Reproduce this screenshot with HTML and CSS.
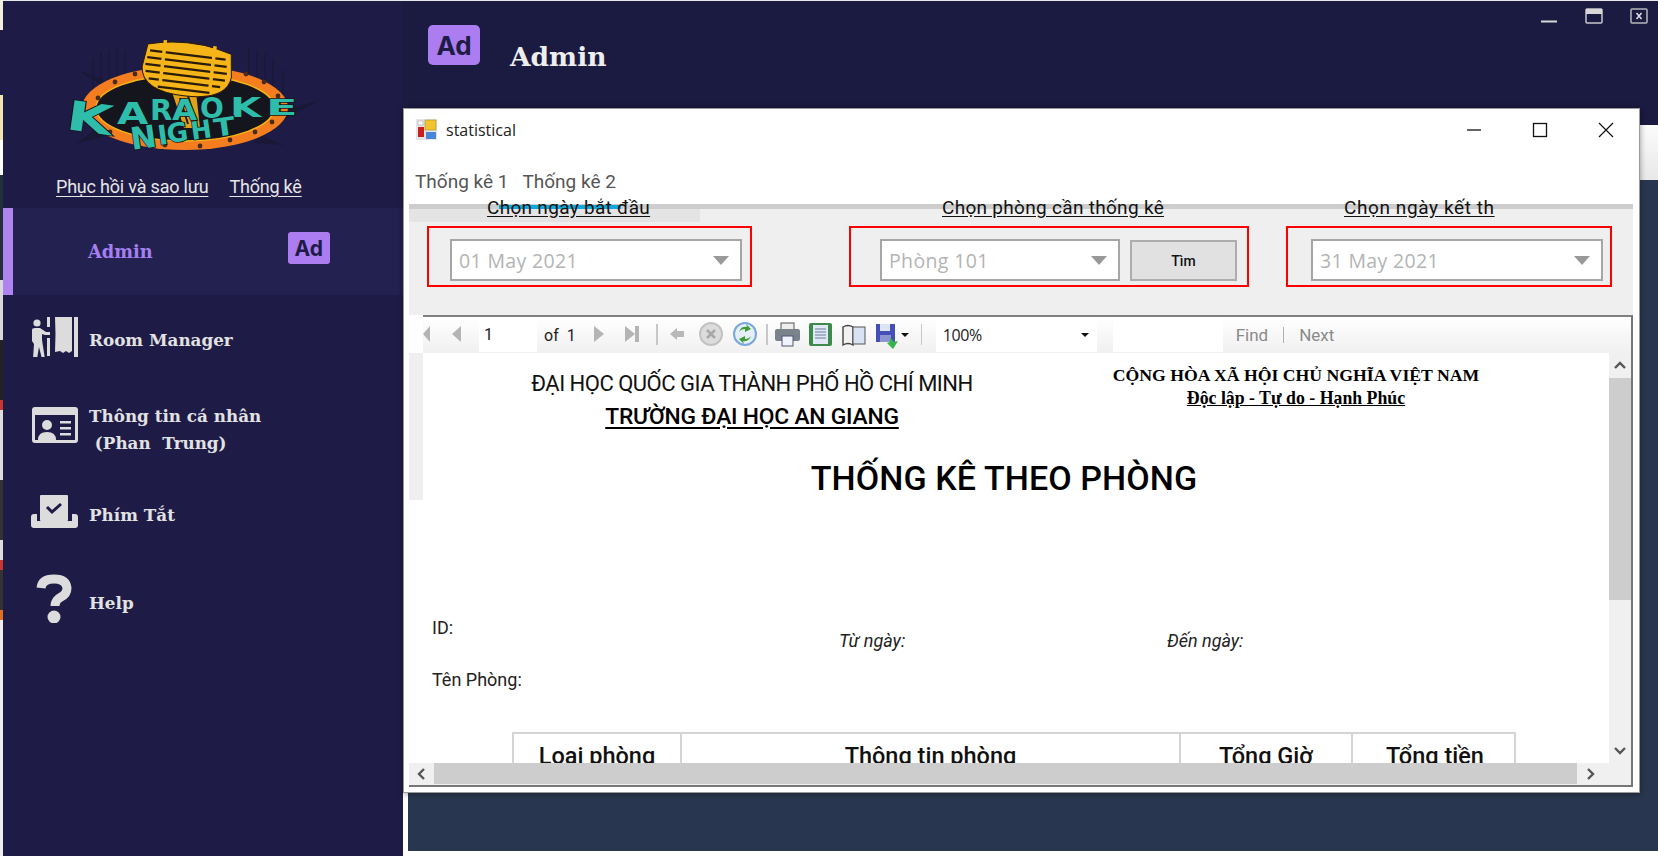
FILE: index.html
```html
<!DOCTYPE html>
<html lang="vi">
<head>
<meta charset="utf-8">
<title>statistical</title>
<link rel="stylesheet" href="styles.css">
</head>
<body>
<div class="app">
  <div class="edge"></div>
  <aside class="sidebar">
    <svg class="logo" viewBox="0 0 280 130" width="280" height="130">
      <g fill="#111118" opacity=".35">
        <path d="M28 40l26 10-4 4zM228 82l42-12-36 20zM45 100l-20 14 30-8zM210 105l24 10-30-2z"/>
        <g opacity=".7">
          <rect x="42" y="28" width="2" height="44"/><rect x="50" y="22" width="2" height="40"/><rect x="58" y="20" width="2" height="34"/><rect x="66" y="18" width="2" height="30"/><rect x="74" y="20" width="2" height="24"/>
          <rect x="198" y="18" width="2" height="30"/><rect x="206" y="20" width="2" height="36"/><rect x="214" y="24" width="2" height="40"/><rect x="222" y="28" width="2" height="40"/><rect x="232" y="40" width="2" height="36"/>
        </g>
      </g>
      <ellipse cx="135" cy="78" rx="103" ry="42" fill="#f47d20"/>
      <ellipse cx="135" cy="78" rx="89" ry="33" fill="#15151d" stroke="#f5b417" stroke-width="1.5"/>
      <g fill="#4a2c14">
        <circle cx="48" cy="68" r="2.4"/><circle cx="65" cy="52" r="2.4"/><circle cx="85" cy="44" r="2.4"/><circle cx="196" cy="44" r="2.4"/><circle cx="214" cy="52" r="2.4"/><circle cx="228" cy="66" r="2.4"/><circle cx="60" cy="102" r="2.4"/><circle cx="115" cy="115" r="2.4"/><circle cx="150" cy="116" r="2.4"/><circle cx="180" cy="110" r="2.4"/><circle cx="205" cy="102" r="2.4"/><circle cx="222" cy="92" r="2.4"/>
      </g>
      <path d="M122 62h24l4 36h-16z" fill="#e0a216"/>
      <path d="M130 68l8 26M138 66l8 26" stroke="#2a1c08" stroke-width="2" fill="none"/>
      <g transform="rotate(7 137 40)">
        <path d="M95 19Q137 7 179 19L182 42Q180 66 137 66Q94 66 92 42Z" fill="#f5b417" stroke="#2a1c08" stroke-width="1"/>
        <path d="M98 25h76M96 32h80M95 39h82M96 46h80M100 53h72M110 60h52" stroke="#2a1c08" stroke-width="2.200" fill="none"/>
        <path d="M112 13v44M162 13v44" stroke="#f5b417" stroke-width="3.500" fill="none"/>
      </g>
      <g class="logo-type">
        <text font-size="41" transform="translate(15 99) rotate(8) scale(1.45 1)">K</text>
        <text font-size="30" transform="translate(67 94) scale(1.35 1)">A</text>
        <text font-size="29" transform="translate(100 90)">R</text>
        <text font-size="29" transform="translate(122 90) scale(1.12 1)">A</text>
        <text font-size="28" transform="translate(150 88)">O</text>
        <text font-size="26" transform="translate(180 87) scale(1.55 1)">K</text>
        <text font-size="22" transform="translate(216 85) scale(2.100 1)">E</text>
        <text font-size="31" transform="translate(82 120) rotate(-8)">N</text>
        <text font-size="27" transform="translate(109 115) rotate(-8)">I</text>
        <text font-size="26" transform="translate(118 113) rotate(-8)">G</text>
        <text font-size="25" transform="translate(142 110) rotate(-8)">H</text>
        <text font-size="25" transform="translate(165 107) rotate(-8) scale(1.25 1)">T</text>
      </g>
    </svg>
    <nav class="links">
      <a class="link">Phục hồi và sao lưu</a>
      <a class="link">Thống kê</a>
    </nav>
    <div class="current">
      <span class="current-name">Admin</span>
      <span class="badge badge-small">Ad</span>
    </div>
    <ul class="menu">
      <li class="menu-item item-room">
        <svg class="icon" viewBox="0 0 46 41" width="46" height="41" fill="#dcdcdc">
          <circle cx="5" cy="7" r="3.6"/>
          <path d="M0 14q0-2 3-2h5l6 4h4v3h-5l-3-1v6l3 19h-3l-3-12-2 12H1l1-15-2-3z"/>
          <path d="M15 1h3v10h-3zM15 22h3v18h-3z"/>
          <path d="M23 1h17v34l-3 2-3-2-3 2-3-2-5 1q1-18 0-35z"/>
          <path d="M42 1h4v40h-4z"/>
        </svg>
        <span class="item-label">Room Manager</span>
      </li>
      <li class="menu-item item-card">
        <svg class="icon" viewBox="0 0 46 36" width="46" height="36">
          <rect width="46" height="36" rx="3" fill="#dcdcdc"/>
          <rect x="3" y="8" width="40" height="25" fill="#1e1c46"/>
          <circle cx="15" cy="18" r="5" fill="#dcdcdc"/>
          <path d="M6 33q0-8 9-8t9 8z" fill="#dcdcdc"/>
          <path d="M28 14h11v2.500H28zM28 20h11v2.500H28zM28 26h11v2.500H28z" fill="#dcdcdc"/>
        </svg>
        <span class="item-label">Thông tin cá nhân<br>&nbsp;(Phan&nbsp; Trung)</span>
      </li>
      <li class="menu-item item-keys">
        <svg class="icon" viewBox="0 0 47 33" width="47" height="33">
          <rect x="9" width="28" height="26" rx="1" fill="#dcdcdc"/>
          <path d="M16 12l5 5 9-8" fill="none" stroke="#1e1c46" stroke-width="3"/>
          <path d="M3 19h3v7h35v-7h3q3 0 3 3v8q0 3-3 3H3q-3 0-3-3v-8q0-3 3-3z" fill="#dcdcdc"/>
        </svg>
        <span class="item-label">Phím Tắt</span>
      </li>
      <li class="menu-item item-help">
        <svg class="icon icon-help" viewBox="0 0 36 49" width="36" height="49">
          <path d="M5 14q1-9 13-9t13 9q0 6-6 9t-6 9" fill="none" stroke="#dcdcdc" stroke-width="9"/>
          <circle cx="18" cy="43" r="6.500" fill="#dcdcdc"/>
        </svg>
        <span class="item-label">Help</span>
      </li>
    </ul>
  </aside>
  <main class="main">
    <header class="topbar">
      <span class="badge badge-large">Ad</span>
      <span class="top-name">Admin</span>
      <div class="sys-controls">
        <svg viewBox="0 0 18 16" width="18" height="16"><path d="M1 13.500h16" stroke="#d8d8d8" stroke-width="2"/></svg>
        <svg viewBox="0 0 18 16" width="18" height="16"><rect x="1" y="1" width="16" height="14" rx="1" fill="none" stroke="#c8c8c8" stroke-width="1.500"/><rect x="1" y="1" width="16" height="5" fill="#d8d8d8"/></svg>
        <svg viewBox="0 0 18 16" width="18" height="16"><rect x="1" y="1" width="16" height="14" rx="1" fill="none" stroke="#b8b8b8" stroke-width="1.500"/><path d="M6.500 5l5 6m0-6l-5 6" stroke="#e0e0e0" stroke-width="1.500"/></svg>
      </div>
    </header>
    <div class="content">
      <div class="content-strip"></div>
      <div class="content-panel"></div>
    </div>
  </main>
</div>

<section class="window">
  <div class="win-title">
    <svg class="win-icon" viewBox="0 0 21 21" width="21" height="21">
      <rect width="21" height="21" fill="#e4e4e4"/>
      <rect x="9" y="1" width="11" height="10" fill="#f2c430" stroke="#b08a20" stroke-width=".6"/>
      <rect x="2" y="8" width="6" height="10" fill="#c8201c"/>
      <rect x="10" y="13" width="10" height="7" fill="#4a86d8"/>
      <rect x="2" y="2" width="5" height="4" fill="#fff" stroke="#aaa" stroke-width=".6"/>
    </svg>
    <span class="win-name">statistical</span>
    <div class="win-controls">
      <svg viewBox="0 0 16 16" width="16" height="16"><path d="M1 8h14" stroke="#111" stroke-width="1.300"/></svg>
      <svg viewBox="0 0 16 16" width="16" height="16"><rect x="1.500" y="1.500" width="13" height="13" fill="none" stroke="#111" stroke-width="1.300"/></svg>
      <svg viewBox="0 0 16 16" width="16" height="16"><path d="M1 1l14 14M15 1L1 15" stroke="#111" stroke-width="1.200"/></svg>
    </div>
  </div>
  <div class="win-menu"><span>Thống kê 1</span><span>Thống kê 2</span></div>

  <div class="filters">
    <div class="tab-hint"></div>
    <div class="group group-start">
      <div class="group-label">Chọn ngày bắt đầu</div>
      <div class="red-box">
        <div class="combo"><span>01 May 2021</span><i class="caret"></i></div>
      </div>
    </div>
    <div class="group group-room">
      <div class="group-label">Chọn phòng cần thống kê</div>
      <div class="red-box">
        <div class="combo"><span>Phòng 101</span><i class="caret"></i></div>
        <button class="find-btn">Tìm</button>
      </div>
    </div>
    <div class="group group-end">
      <div class="group-label">Chọn ngày kết th</div>
      <div class="red-box">
        <div class="combo"><span>31 May 2021</span><i class="caret"></i></div>
      </div>
    </div>
  </div>

  <div class="viewer">
    <div class="toolbar">
      <svg class="nav-a" viewBox="0 0 56 36" width="56" height="36" fill="#b4b4b4">
        <path d="M7 9v16L0 17zM38 9v16l-9-8z"/>
      </svg>
      <div class="page-box">1</div>
      <span class="of">of</span><span class="of-num">1</span>
      <svg class="nav-b" viewBox="0 0 331 36" width="331" height="36">
        <path d="M3 9l10 8-10 8zM34 9l10 8-10 8z" fill="#b4b4b4"/>
        <rect x="44" y="9" width="4" height="16" fill="#b4b4b4"/>
        <path d="M66 7v21M176 7v21M331 7v21" stroke="#b8b8b8" stroke-width="1.500"/>
        <path d="M79 17l7-6v3h7v6h-7v3z" fill="#b8b8b8"/>
        <circle cx="120" cy="17" r="11" fill="#dcdcdc" stroke="#c2c2c2" stroke-width="2"/>
        <path d="M116 13l8 8m0-8l-8 8" stroke="#a8a8a8" stroke-width="2.500"/>
        <circle cx="154" cy="17" r="11" fill="#e4effa" stroke="#7aa7dc" stroke-width="2"/>
        <path d="M148 15q2-6 8-5l-1-3 5 5-6 3 0-3q-4 0-6 3zM160 19q-2 6-8 5l1 3-5-5 6-3 0 3q4 0 6-3z" fill="#3f9b35"/>
        <rect x="190" y="6" width="13" height="7" fill="#eee" stroke="#555"/>
        <rect x="184" y="12" width="25" height="12" rx="2" fill="#7a838c"/>
        <rect x="191" y="19" width="11" height="10" fill="#eef4fb" stroke="#557"/>
        <rect x="218" y="6" width="23" height="23" rx="2" fill="#3e8a4c"/>
        <rect x="222" y="8" width="15" height="19" fill="#dfe8f3"/>
        <path d="M224 12h11M224 15h11M224 18h11M224 21h11" stroke="#6b7f99"/>
        <path d="M252 10q5-3 10 0v18q-5-3-10 0z" fill="#f2f2f2" stroke="#444" stroke-width="1.400"/>
        <rect x="262" y="10" width="12" height="17" fill="#d7e3f3" stroke="#555"/>
        <path d="M285 7h19v18h-19z" fill="#4450b8"/>
        <rect x="289" y="7" width="10" height="7" fill="#dfe4f2"/>
        <rect x="289" y="18" width="11" height="7" fill="#8d95d0"/>
        <path d="M299 20l4 5 4-1-5 8-6-6 3-1z" fill="#36b34a"/>
        <path d="M310 16h8l-4 4z" fill="#111"/>
      </svg>
      <div class="zoom-box"><span>100%</span><i class="caret-small"></i></div>
      <div class="find-box"></div>
      <span class="tool-link">Find</span>
      <span class="tool-sep"></span>
      <span class="tool-link">Next</span>
    </div>
    <div class="view-body">
      <div class="report">
        <div class="report-gutter"></div>
        <div class="report-head">
          <div class="head-left">
            <div class="uni">ĐẠI HỌC QUỐC GIA THÀNH PHỐ HỒ CHÍ MINH</div>
            <div class="school">TRƯỜNG ĐẠI HỌC AN GIANG</div>
          </div>
          <div class="head-right">
            <div class="nation">CỘNG HÒA XÃ HỘI CHỦ NGHĨA VIỆT NAM</div>
            <div class="motto">Độc lập - Tự do - Hạnh Phúc</div>
          </div>
        </div>
        <h1 class="report-title">THỐNG KÊ THEO PHÒNG</h1>
        <div class="meta">
          <div class="meta-col">
            <div class="meta-id">ID:</div>
            <div class="meta-room">Tên Phòng:</div>
          </div>
          <div class="meta-date date-from">Từ ngày:</div>
          <div class="meta-date date-to">Đến ngày:</div>
        </div>
        <div class="stat-table">
          <div class="cell cell-type">Loại phòng</div>
          <div class="cell cell-info">Thông tin phòng</div>
          <div class="cell cell-hours">Tổng Giờ</div>
          <div class="cell cell-money">Tổng tiền</div>
        </div>
      </div>
      <div class="vscroll">
        <svg viewBox="0 0 22 25" width="22" height="25"><path d="M6 15l5-5 5 5" fill="none" stroke="#555" stroke-width="2.400"/></svg>
        <div class="v-thumb"></div>
        <svg class="v-down" viewBox="0 0 22 25" width="22" height="25"><path d="M6 10l5 5 5-5" fill="none" stroke="#555" stroke-width="2.400"/></svg>
      </div>
    </div>
    <div class="hscroll">
      <svg viewBox="0 0 25 22" width="25" height="22"><path d="M15 6l-5 5 5 5" fill="none" stroke="#555" stroke-width="2.400"/></svg>
      <div class="h-thumb"></div>
      <svg viewBox="0 0 32 22" width="32" height="22"><path d="M11 6l5 5-5 5" fill="none" stroke="#555" stroke-width="2.400"/></svg>
      <div class="h-corner"></div>
    </div>
  </div>
</section>
</body>
</html>
```
FILE: styles.css
```css
* { box-sizing: border-box; }
html, body { margin: 0; padding: 0; width: 1658px; height: 856px; overflow: hidden; background: #fff; }
body { font-family: "Roboto", "Liberation Sans", sans-serif; color: #000; }

.app { display: flex; width: 1658px; height: 856px; }
.edge {
  width: 3px; flex: none;
  background: linear-gradient(#f4efdc 0 30px, #1e1c46 30px 95px, #f2e6b0 95px 140px, #fff 140px 175px, #20303c 175px 280px, #d8d8d8 280px 340px, #222 340px 400px, #c33 400px 410px, #ddd 410px 480px, #333 480px 540px, #ddd 540px 560px, #c33 560px 570px, #333 570px 610px, #e07020 610px 620px, #eee 620px 856px);
}
.sidebar { width: 400px; flex: none; background: #1e1c46; border-top: 1px solid #e8e8e8; padding-top: 29px; display: flex; flex-direction: column; }
.logo { display: block; margin-left: 47px; flex: none; }
.logo-type text { font-family: "DejaVu Sans", sans-serif; font-weight: 700; fill: #2ebdaa; stroke: #15151d; stroke-width: 1.600px; paint-order: stroke; }

.links { display: flex; gap: 21px; margin: 15px 0 0 53px; height: 32px; align-items: flex-start; }
.link { font-size: 18px; line-height: 24px; color: #e6e6e6; text-decoration: underline; text-underline-offset: 3px; letter-spacing: -.2px; }

.current { height: 87px; background: #23214f; border-left: 10px solid #b084f0; margin-top: 1px; position: relative; display: flex; align-items: center; }
.current-name { margin: 0 0 0 75px; font: 700 17.800px "DejaVu Serif", serif; color: #a57fef; }
.badge { display: flex; align-items: center; justify-content: center; background: #ab7df0; color: #1e1c46; font: 700 21px "Inter", sans-serif; border-radius: 3px; }
.badge-small { width: 42px; height: 32px; margin: -7px 0 0 135px; }
.badge-large { width: 52px; height: 40px; font-size: 26px; border-radius: 5px; }

.menu { list-style: none; margin: 0; padding: 0 0 0 28px; }
.menu-item { display: flex; align-items: flex-start; color: #e2e2e2; }
.icon { flex: none; display: block; }
.item-label { font: 700 16.800px/27px "DejaVu Serif", serif; margin-left: 11px; white-space: nowrap; }
.item-room { margin-top: 21px; height: 41px; }
.item-room .icon { margin-left: 1px; }
.item-room .item-label { margin-top: 11px; }
.item-card { margin-top: 49px; height: 56px; }
.item-card .icon { margin: 1px 0 0 1px; }
.item-card .item-label { margin-top: -3px; }
.item-keys { margin-top: 34px; }
.item-keys .icon { margin: -1px 0 0 0; }
.item-keys .item-label { margin-top: 6px; }
.item-help { margin-top: 45px; }
.icon-help { margin-left: 5px; margin-right: 6px; }
.item-help .item-label { margin-top: 16px; }

.main { flex: 1; display: flex; flex-direction: column; min-width: 0; }
.topbar { height: 125px; flex: none; background: #1b1a40; border-top: 1px solid #e8e8e8; position: relative; display: flex; align-items: flex-start; padding: 24px 0 0 25px; }
.top-name { font: 700 26.500px "DejaVu Serif", serif; color: #eee; margin: 16px 0 0 30px; }
.sys-controls { display: flex; gap: 27px; margin-left: auto; margin-top: -17px; margin-right: 10px; }
.content { flex: 1; background: #fff; padding: 0 0 5px 5px; display: flex; flex-direction: column; }
.content-strip { height: 55px; background: linear-gradient(#fbfbfb, #e8e8e8); flex: none; }
.content-panel { flex: 1; background: #28374f; }

.window { position: absolute; left: 403px; top: 108px; width: 1237px; height: 685px; background: #fff; border: 1px solid #9a9a9a; box-shadow: 0 1px 6px rgba(0,0,0,.4); padding: 0 6px 5px 5px; display: flex; flex-direction: column; }
.win-title { height: 41px; display: flex; align-items: center; flex: none; padding-left: 7px; }
.win-icon { flex: none; }
.win-name { font: 16px "Open Sans", sans-serif; color: #222; margin-left: 9px; }
.win-controls { margin-left: auto; display: flex; gap: 50px; margin-right: 19px; }
.win-menu { height: 54px; flex: none; display: flex; gap: 14px; padding: 19px 0 0 6px; font: 19px/26px "Roboto", sans-serif; color: #555; }

.filters { flex: none; height: 111px; background: #efefef; border-top: 5px solid #cdcdcd; padding-left: 18px; display: flex; position: relative; }
.tab-hint { position: absolute; left: 0; top: 0; width: 291px; height: 13px; background: #e4e4e4; }
.tab-hint::before { content: ""; position: absolute; left: 90px; top: -4px; width: 122px; height: 4px; background: #10a8d8; }
.group { position: relative; margin-top: -11px; }
.group-label { font-size: 19px; line-height: 20px; height: 20px; margin-bottom: 8px; text-decoration: underline; text-underline-offset: 2px; letter-spacing: .3px; color: #111; white-space: nowrap; }
.group-start { width: 325px; }
.group-start .group-label { padding-left: 60px; }
.group-room { width: 400px; margin-left: 97px; }
.group-room .group-label { padding-left: 93px; }
.group-end { width: 326px; margin-left: 37px; }
.group-end .group-label { padding-left: 58px; letter-spacing: .6px; }
.red-box { height: 61px; border: 2px solid #ff0000; display: flex; align-items: flex-start; padding-top: 11px; }
.group-start .red-box { padding-left: 21px; }
.group-room .red-box { padding-left: 29px; }
.group-end .red-box { padding-left: 23px; }
.combo { width: 292px; height: 42px; background: #fff; border: 2px solid #a6a6a6; display: flex; align-items: center; padding: 0 11px 0 7px; font: 19.500px "Open Sans", sans-serif; letter-spacing: .35px; color: #b4b4b4; }
.group-room .combo { width: 240px; }
.caret { margin-left: auto; width: 0; height: 0; border: 8.5px solid transparent; border-top: 9px solid #999; border-bottom: 0; }
.find-btn { width: 107px; height: 41px; margin: 1px 0 0 10px; background: #e1e1e1; border: 2px solid #adadad; font: 500 14px "Roboto", sans-serif; color: #111; padding: 0; }

.viewer { flex: 1; display: flex; flex-direction: column; min-height: 0; }
.toolbar { height: 38px; flex: none; margin-left: 14px; border-top: 2px solid #808080; border-right: 2px solid #777; background: linear-gradient(#fff, #f0f0f0); display: flex; align-items: center; overflow: hidden; }
.nav-a, .nav-b { flex: none; display: block; }
.page-box { width: 58px; height: 33px; background: #fff; font-size: 16px; line-height: 32px; padding-left: 5px; flex: none; color: #222; }
.of { margin-left: 7px; font-size: 16px; color: #222; }
.of-num { margin-left: 8px; font-size: 16px; color: #223; }
.nav-b { margin-left: 15px; }
.zoom-box { width: 161px; height: 33px; margin-left: 14px; background: #fff; flex: none; display: flex; align-items: center; padding-left: 7px; font: 16px "Open Sans", sans-serif; color: #222; letter-spacing: -.4px; }
.caret-small { margin-left: auto; margin-right: 8px; border: 4px solid transparent; border-top: 4px solid #111; border-bottom: 0; }
.find-box { width: 110px; height: 33px; background: #fff; margin-left: 16px; flex: none; }
.tool-link { font: 17px "Roboto", sans-serif; color: #8a8a8a; }
.find-box + .tool-link { margin-left: 13px; }
.tool-sep { width: 1px; height: 16px; background: #b0b0b0; margin: 0 15px; }

.view-body { height: 410px; flex: none; display: flex; border-right: 2px solid #777; }
.report { flex: 1; position: relative; background: #fff; overflow: hidden; min-width: 0; padding-left: 14px; }
.report-gutter { position: absolute; left: 0; top: -1px; width: 14px; height: 148px; background: #efefef; }
.report-head { display: grid; grid-template-columns: 658px 430px; }
.head-left { text-align: center; padding-top: 17px; }
.uni { font-size: 22px; line-height: 28px; letter-spacing: -.5px; color: #111; }
.school { font-size: 22.800px; line-height: 28px; margin-top: 5px; font-weight: 500; text-decoration: underline; text-underline-offset: 3px; letter-spacing: -.2px; }
.head-right { text-align: center; padding-top: 12px; font-family: "Liberation Serif", serif; font-weight: 700; }
.nation { font-size: 17.700px; line-height: 20px; }
.motto { font-size: 17.800px; line-height: 20px; margin-top: 3px; text-decoration: underline; }
.report-title { margin: 25px 0 0 -14px; text-align: center; font-size: 34px; line-height: 44px; font-weight: 500; letter-spacing: .1px; width: 1176px; padding-left: 14px; }
.meta { display: grid; grid-template-columns: 407px 328px 1fr; margin-top: 117px; margin-left: 9px; font-size: 18px; line-height: 22px; color: #222; }
.meta-room { margin-top: 30px; }
.meta-date { font-style: italic; margin-top: 13px; }
.stat-table { display: grid; grid-template-columns: 166px 499px 172px 166px; margin: 41px 0 0 89px; width: 1004px; border: 2px solid #d4d4d4; border-bottom: 0; font-size: 23.500px; font-weight: 500; text-align: center; line-height: 28px; height: 60px; }
.cell { border-left: 2px solid #d4d4d4; padding-top: 8px; color: #111; }
.cell-type { border-left: 0; }
.vscroll { width: 22px; flex: none; background: #f0f0f0; display: flex; flex-direction: column; }
.vscroll svg { display: block; flex: none; }
.v-thumb { height: 222px; background: #cdcdcd; }
.v-down { margin-top: auto; margin-bottom: 0; }
.hscroll { height: 24px; flex: none; display: flex; background: #f0f0f0; border-right: 2px solid #777; border-bottom: 2px solid #777; align-items: stretch; }
.hscroll svg { display: block; flex: none; }
.h-thumb { width: 1143px; height: 21px; background: #cdcdcd; flex: none; }
.h-corner { flex: 1; }
```
